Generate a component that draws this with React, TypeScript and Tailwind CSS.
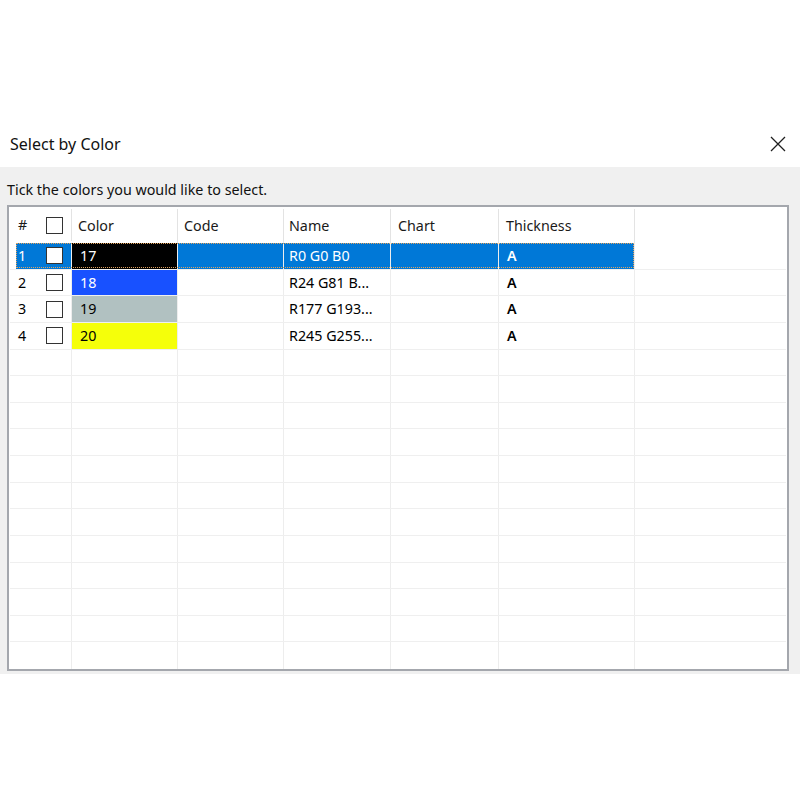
import React from "react";

type Row = {
  n: string;
  swatch: string;
  swatchText: string;
  label: string;
  name: string;
  thick: string;
  selected?: boolean;
};

const rows: Row[] = [
  { n: "1", swatch: "bg-[#000000]", swatchText: "text-white", label: "17", name: "R0 G0 B0", thick: "A", selected: true },
  { n: "2", swatch: "bg-[#1851ff]", swatchText: "text-white", label: "18", name: "R24 G81 B...", thick: "A" },
  { n: "3", swatch: "bg-[#b1c1c1]", swatchText: "text-black", label: "19", name: "R177 G193...", thick: "A" },
  { n: "4", swatch: "bg-[#f5ff0a]", swatchText: "text-black", label: "20", name: "R245 G255...", thick: "A" },
];

const grid = "grid grid-cols-[62px_106px_106px_107px_108px_136px_1fr]";

function Check() {
  return <div className="w-[17px] h-[17px] border border-[#333333] bg-white shrink-0" />;
}

function CloseIcon() {
  return (
    <svg width="16" height="16" viewBox="0 0 16 16" className="block">
      <path d="M1 1 L15 15 M15 1 L1 15" stroke="#1f1f1f" strokeWidth="1.3" fill="none" />
    </svg>
  );
}

export default function App() {
  const empty = Array.from({ length: 12 });
  return (
    <div className="w-[800px] h-[800px] bg-white text-black" style={{ fontFamily: '"Noto Sans", "Open Sans", sans-serif' }}>
      <div className="h-[120px]" />
      <div className="h-[47px] flex items-center justify-between pl-[10px] pr-[14px]">
        <span className="text-[16px] text-[#111]">Select by Color</span>
        <CloseIcon />
      </div>
      <div className="bg-[#f0f0f0] pl-[7px] pr-[11px] pt-[10px] pb-[3px]">
        <div className="h-[26px] flex items-center text-[14.3px] text-[#111] whitespace-nowrap">Tick the colors you would like to select.</div>
        <div className="mt-[2px] border-2 border-[#a4a7ad] bg-white text-[14.3px]">
          {/* header */}
          <div className={`${grid} h-[36px] px-[1px] text-[#1a1a1a]`}>
            <div className="flex items-center border-r border-[#e3e3e3] my-[2px]">
              <span className="pl-[8px] w-[36px]">#</span>
              <Check />
            </div>
            <div className="flex items-center pl-[6px] border-r border-[#e3e3e3] mt-[2px]">Color</div>
            <div className="flex items-center pl-[6px] border-r border-[#e3e3e3] mt-[2px]">Code</div>
            <div className="flex items-center pl-[5px] border-r border-[#e3e3e3] mt-[2px]">Name</div>
            <div className="flex items-center pl-[7px] border-r border-[#e3e3e3] mt-[2px]">Chart</div>
            <div className="flex items-center pl-[7px] border-r border-[#e3e3e3] mt-[2px]">Thickness</div>
            <div />
          </div>
          {/* data rows */}
          {rows.map((r) => {
            const sel = r.selected;
            const cellBg = sel ? "bg-[#0078d7] text-white" : "";
            return (
              <div key={r.n} className="relative px-[1px]">
                <div className={`${grid} h-[26.625px] border-b border-[#efefef]`}>
                  <div className="flex border-r border-[#ededed]">
                    <div className={`ml-[6px] flex-1 flex items-center ${cellBg}`}>
                      <span className="pl-[2px] w-[30px]">{r.n}</span>
                      <Check />
                    </div>
                  </div>
                  <div className={`flex items-center pl-[8px] border-r border-[#ededed] ${r.swatch} ${r.swatchText}`}>{r.label}</div>
                  <div className={`border-r border-[#ededed] ${cellBg}`} />
                  <div className={`flex items-center pl-[5px] border-r border-[#ededed] whitespace-nowrap ${cellBg}`}>
                    <span>{r.name}</span>
                  </div>
                  <div className={`border-r border-[#ededed] ${cellBg}`} />
                  <div className={`flex items-center pl-[8px] border-r border-[#ededed] font-semibold ${cellBg}`}>{r.thick}</div>
                  <div />
                </div>
                {sel && (
                  <div className="absolute top-0 left-[7px] w-[618px] h-[25px] border border-dotted border-[#e3a25b] pointer-events-none" />
                )}
              </div>
            );
          })}
          {empty.map((_, i) => (
            <div key={i} className="px-[1px]">
              <div className={`${grid} h-[26.625px] ${i < empty.length - 1 ? "border-b border-[#efefef]" : ""}`}>
                <div className="border-r border-[#ededed]" />
                <div className="border-r border-[#ededed]" />
                <div className="border-r border-[#ededed]" />
                <div className="border-r border-[#ededed]" />
                <div className="border-r border-[#ededed]" />
                <div className="border-r border-[#ededed]" />
                <div />
              </div>
            </div>
          ))}
        </div>
      </div>
    </div>
  );
}
